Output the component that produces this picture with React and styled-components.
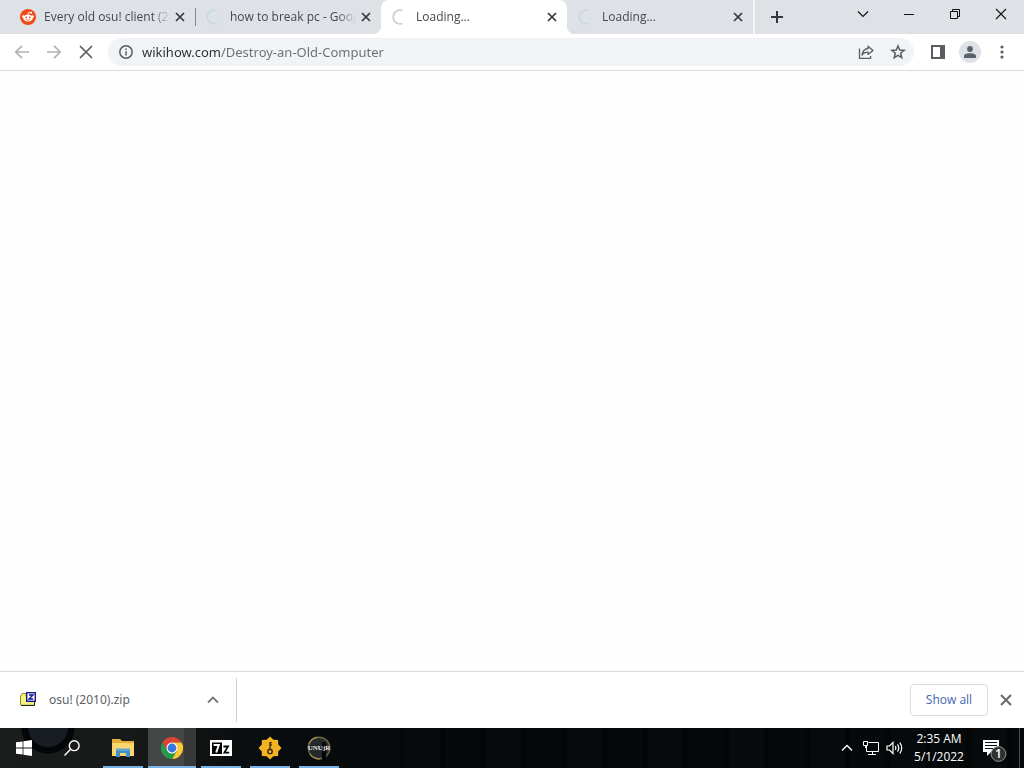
import React from 'react';
import styled, { createGlobalStyle, css } from 'styled-components';

const GlobalStyle = createGlobalStyle`
  * { box-sizing: border-box; }
  html, body, #root { height: 100%; }
  body {
    margin: 0;
    overflow: hidden;
    font-family: "Open Sans", "Noto Sans", sans-serif;
    font-size: 12px;
    color: #3c4043;
  }
  button, input { font: inherit; color: inherit; }
`;

const Desktop = styled.div`
  display: flex;
  flex-direction: column;
  height: 100vh;
  background: #fff;
`;

const PlainButton = styled.button`
  display: flex;
  align-items: center;
  justify-content: center;
  flex: none;
  padding: 0;
  border: 0;
  background: transparent;
`;

const TabStrip = styled.header`
  display: flex;
  height: 34px;
  padding-left: 9px;
  background: #dee1e6;
`;

const Tabs = styled.div`
  display: flex;
  flex: 0 1 744px;
  min-width: 0;
`;

const Tab = styled.div`
  display: flex;
  align-items: center;
  flex: 1 1 0;
  min-width: 0;
  height: 34px;
  padding: 0 7px 0 11px;
  position: relative;
  ${({ $active }) => $active && css`
    background: #fff;
    border-radius: 8px 8px 0 0;
    &::before, &::after {
      content: "";
      position: absolute;
      bottom: 0;
      width: 8px;
      height: 8px;
    }
    &::before {
      left: -8px;
      background: radial-gradient(circle at 0 0, transparent 8px, #fff 8px);
    }
    &::after {
      right: -8px;
      background: radial-gradient(circle at 100% 0, transparent 8px, #fff 8px);
    }
  `}
  ${({ $divider }) => $divider && css`
    &::after {
      content: "";
      position: absolute;
      right: -1px;
      top: 8px;
      width: 1px;
      height: 18px;
      background: #85888d;
    }
  `}
`;

const TabTitle = styled.span`
  flex: 1;
  min-width: 0;
  margin-left: 8px;
  overflow: hidden;
  white-space: nowrap;
  line-height: 18px;
  color: #45494d;
  mask-image: linear-gradient(to left, transparent 2px, #000 20px);
`;

const TabClose = styled(PlainButton)`
  width: 16px;
  height: 16px;
  color: #34373b;
`;

const NewTab = styled(PlainButton)`
  width: 46px;
  border-left: 2px solid #f1f3f5;
  color: #34373b;
`;

const WindowControls = styled.div`
  display: flex;
  height: 28px;
  margin-left: auto;
`;

const WindowButton = styled(PlainButton)`
  width: 46px;
  color: #111;
`;

const Toolbar = styled.nav`
  display: flex;
  align-items: center;
  height: 37px;
  padding: 0 6px;
  border-bottom: 1px solid #d9dadc;
`;

const ToolButton = styled(PlainButton)`
  width: 32px;
  height: 28px;
  color: ${({ disabled }) => (disabled ? '#b0b2b4' : '#5a5e62')};
`;

const Omnibox = styled.div`
  display: flex;
  align-items: center;
  flex: 1;
  min-width: 0;
  height: 28px;
  margin: 0 8px 0 6px;
  border-radius: 14px;
  background: #f1f3f4;
`;

const SiteInfo = styled(PlainButton)`
  width: 34px;
  padding-left: 2px;
  color: #5a5e62;
`;

const Address = styled.input`
  flex: 1;
  min-width: 0;
  height: 20px;
  padding: 0;
  border: 0;
  outline: 0;
  font-family: "Noto Sans", "Open Sans", sans-serif;
  font-size: 13px;
  line-height: 20px;
  color: transparent;
  background: linear-gradient(to right, #2b2e31 79px, #6a6e72 79px);
  -webkit-background-clip: text;
  background-clip: text;
`;

const Avatar = styled.span`
  display: flex;
  align-items: center;
  justify-content: center;
  width: 22px;
  height: 22px;
  border-radius: 50%;
  background: #dee1e6;
`;

const Page = styled.main`
  flex: 1;
  min-height: 0;
  background: #fefefe;
`;

const DownloadShelf = styled.section`
  display: flex;
  align-items: center;
  height: 57px;
  padding-right: 8px;
  border-top: 1px solid #d9dadc;
`;

const Download = styled.div`
  display: flex;
  align-items: center;
  width: 237px;
  height: 44px;
  padding: 0 15px 0 20px;
  border-right: 1px solid #cfd1d3;
`;

const FileName = styled.span`
  flex: 1;
  margin-left: 13px;
  font-family: "Noto Sans", "Open Sans", sans-serif;
  line-height: 20px;
  color: #5d6165;
`;

const ShelfMenu = styled(PlainButton)`
  width: 16px;
  height: 16px;
  color: #77797c;
`;

const ShowAll = styled.button`
  width: 78px;
  height: 32px;
  margin-left: auto;
  padding: 0 0 2px;
  border: 1px solid #dadce0;
  border-radius: 4px;
  background: #fff;
  font-weight: 500;
  color: #3f66ae;
`;

const ShelfClose = styled(PlainButton)`
  width: 20px;
  height: 20px;
  margin-left: 8px;
  color: #696c6f;
`;

const Taskbar = styled.footer`
  display: flex;
  height: 40px;
  color: #fff;
  background:
    radial-gradient(ellipse 27px 26px at 48px 0, #181d23 0 70%, #040506 76% 96%, transparent 100%),
    linear-gradient(to right, #1b1c1c 0, #171818 140px, #0b0e10 240px, #070a0b 350px, transparent 440px),
    repeating-linear-gradient(to right, #070a0c 0 34px, #030505 36px 39px, #06090c 41px 74px, #040606 76px 81px);
`;

const TaskGroup = styled.div`
  display: flex;
  gap: 1px;
  margin-left: 3px;
`;

const TaskButton = styled(PlainButton)`
  width: 48px;
  height: 40px;
  position: relative;
  ${({ $running }) => $running && css`
    &::after {
      content: "";
      position: absolute;
      bottom: 0;
      left: ${({ $current }) => ($current ? 0 : 4)}px;
      right: ${({ $current }) => ($current ? 0 : 4)}px;
      height: 2px;
      background: #76b4e8;
    }
  `}
  ${({ $current }) => $current && css`
    background: linear-gradient(to right, #454747 75%, #383a3a 75%);
  `}
`;

const Tray = styled.div`
  display: flex;
  margin-left: auto;
`;

const TrayButton = styled(PlainButton)`
  width: 24px;
`;

const Clock = styled(PlainButton)`
  flex-direction: column;
  width: 64px;
  font-size: 12px;
  line-height: 18px;
`;

const ActionCenter = styled(PlainButton)`
  width: 48px;
`;

const ShowDesktop = styled(PlainButton)`
  width: 5px;
  border-left: 1px solid #4b4d4f;
`;

const Cross = ({ size = 8, stroke = 1.7 }) => (
  <svg width={size + 2} height={size + 2} viewBox={`-1 -1 ${size + 2} ${size + 2}`} fill="none" stroke="currentColor" strokeWidth={stroke} aria-hidden="true">
    <path d={`M0 0 L${size} ${size} M${size} 0 L0 ${size}`} />
  </svg>
);

const Spinner = ({ color }) => (
  <svg width="16" height="16" viewBox="0 0 16 16" fill="none" stroke={color} strokeWidth="1.6" aria-hidden="true">
    <path d="M10.5 1.4 A7 7 0 1 0 10.5 14.6" />
  </svg>
);

const RedditIcon = () => (
  <svg width="16" height="16" viewBox="0 0 16 16" aria-hidden="true">
    <circle cx="8" cy="8" r="8" fill="#f04a17" />
    <path d="M8 6 L8.7 3.3 L11 3.8" fill="none" stroke="#fff" strokeWidth="0.8" />
    <circle cx="11.2" cy="3.8" r="1" fill="#fff" />
    <circle cx="3.4" cy="7.6" r="1.3" fill="#fff" />
    <circle cx="12.6" cy="7.6" r="1.3" fill="#fff" />
    <ellipse cx="8" cy="9.1" rx="4.8" ry="3.5" fill="#fff" />
    <circle cx="6.1" cy="8.4" r="0.9" fill="#f04a17" />
    <circle cx="9.9" cy="8.4" r="0.9" fill="#f04a17" />
    <path d="M6 10.5 Q8 11.9 10 10.5" fill="none" stroke="#f04a17" strokeWidth="0.7" />
  </svg>
);

const PlusIcon = () => (
  <svg width="12" height="12" viewBox="0 0 12 12" stroke="currentColor" strokeWidth="2" aria-hidden="true">
    <path d="M6 0 V12 M0 6 H12" />
  </svg>
);

const ArrowIcon = ({ forward }) => (
  <svg width="16" height="16" viewBox="0 0 16 16" fill="none" stroke="currentColor" strokeWidth="1.7" aria-hidden="true">
    <path d={forward ? 'M1 8 H14 M8 1.8 L14.2 8 L8 14.2' : 'M15 8 H2 M8 1.8 L1.8 8 L8 14.2'} />
  </svg>
);

const InfoIcon = () => (
  <svg width="14" height="14" viewBox="0 0 14 14" fill="none" stroke="currentColor" strokeWidth="1.5" aria-hidden="true">
    <circle cx="7" cy="7" r="6.2" />
    <path d="M7 6.2 V10.4 M7 3.5 V5" />
  </svg>
);

const ShareIcon = () => (
  <svg width="16" height="16" viewBox="0 0 16 16" fill="none" stroke="currentColor" strokeWidth="1.3" strokeLinejoin="round" aria-hidden="true">
    <path d="M1.5 4.5 V14.4 H12.6 V12" />
    <path d="M10 2.2 L15 6.4 L10 10.4 V8.2 C7 8.2 5.3 9 4 11.2 C4.4 7.4 6.5 4.9 10 4.5 Z" />
  </svg>
);

const StarIcon = () => (
  <svg width="16" height="16" viewBox="0 0 16 16" fill="none" stroke="currentColor" strokeWidth="1.5" aria-hidden="true">
    <path d="M8 2 L9.7 6.1 L14.1 6.4 L10.7 9.3 L11.8 13.7 L8 11.3 L4.2 13.7 L5.3 9.3 L1.9 6.4 L6.3 6.1 Z" />
  </svg>
);

const SidePanelIcon = () => (
  <svg width="14" height="14" viewBox="0 0 14 14" aria-hidden="true">
    <path d="M0 0 H14 V14 H0 Z M2 2 V12 H9 V2 Z" fill="currentColor" fillRule="evenodd" />
  </svg>
);

const PersonIcon = () => (
  <svg width="12" height="12" viewBox="0 0 12 12" fill="#58636d" aria-hidden="true">
    <circle cx="6" cy="3" r="2.9" />
    <path d="M0 12 V10.2 C0 8 3 7.2 6 7.2 S12 8 12 10.2 V12 Z" />
  </svg>
);

const DotsIcon = () => (
  <svg width="4" height="14" viewBox="0 0 4 14" fill="currentColor" aria-hidden="true">
    <circle cx="2" cy="2" r="1.6" />
    <circle cx="2" cy="7" r="1.6" />
    <circle cx="2" cy="12" r="1.6" />
  </svg>
);

const Chevron = ({ up, width = 10, stroke = 1.2 }) => (
  <svg width={width + 2} height="8" viewBox={`-1 0 ${width + 2} 8`} fill="none" stroke="currentColor" strokeWidth={stroke} aria-hidden="true">
    <path d={up ? `M0 6.5 L${width / 2} 1.5 L${width} 6.5` : `M0 1.5 L${width / 2} 6.5 L${width} 1.5`} />
  </svg>
);

const MinimizeIcon = () => (
  <svg width="10" height="10" viewBox="0 0 10 10" stroke="currentColor" aria-hidden="true">
    <path d="M0 5.5 H10" />
  </svg>
);

const RestoreIcon = () => (
  <svg width="10" height="10" viewBox="0 0 10 10" fill="none" stroke="currentColor" aria-hidden="true">
    <path d="M0.5 2.5 H7.5 V9.5 H0.5 Z M2.5 2.5 V0.5 H9.5 V7.5 H7.5" />
  </svg>
);

const ZipFileIcon = () => (
  <svg width="16" height="16" viewBox="0 0 16 16" aria-hidden="true">
    <path d="M0.5 4 L2 1.5 H6 V11.5 H14.5 V13 H0.5 Z" fill="#f2f27c" stroke="#8a8a3a" />
    <path d="M1 13.5 H14.5 V9" fill="none" stroke="#222" />
    <rect x="1" y="4" width="13" height="8.5" fill="#f2f27c" />
    <rect x="6.7" y="0.7" width="8.6" height="8.6" fill="#fff" stroke="#17178c" strokeWidth="1.4" />
    <path d="M9 3 H13 L9 7 H13.2" fill="none" stroke="#17178c" strokeWidth="1.4" />
  </svg>
);

const WindowsIcon = () => (
  <svg width="16" height="16" viewBox="0 0 16 16" fill="#fff" aria-hidden="true">
    <path d="M0 2.3 L6.6 1.4 V7.6 H0 Z M7.4 1.3 L16 0 V7.6 H7.4 Z M0 8.4 H6.6 V14.6 L0 13.7 Z M7.4 8.4 H16 V16 L7.4 14.7 Z" />
  </svg>
);

const SearchIcon = () => (
  <svg width="16" height="16" viewBox="0 0 16 16" fill="none" stroke="#fff" strokeWidth="1.4" aria-hidden="true">
    <circle cx="10.2" cy="5.7" r="4.9" />
    <path d="M6.6 9.3 L0.5 15.5" />
  </svg>
);

const FolderIcon = () => (
  <svg width="22" height="18" viewBox="0 0 22 18" aria-hidden="true">
    <path d="M0 0 H8 L10 2 H22 V17 H0 Z" fill="#e6ad37" />
    <path d="M0 4 H22 V17 H0 Z" fill="#fbd66e" />
    <path d="M4 18 V10 H18 V18 H14 V14 H8 V18 Z" fill="#438fc3" />
    <path d="M4 9.5 H18 V12 H4 Z" fill="#5ba6d5" />
  </svg>
);

const ChromeIcon = () => (
  <svg width="22" height="22" viewBox="-11 -11 22 22" aria-hidden="true">
    <path d="M-9.53 -5.5 A11 11 0 0 1 9.53 -5.5 L0 -5.5 L-4.76 2.75 Z" fill="#dc4437" />
    <path d="M9.53 -5.5 A11 11 0 0 1 0 11 L4.76 2.75 L0 -5.5 Z" fill="#fbc934" />
    <path d="M0 11 A11 11 0 0 1 -9.53 -5.5 L-4.76 2.75 L4.76 2.75 Z" fill="#269a4c" />
    <circle r="5.5" fill="#fff" />
    <circle r="4.4" fill="#3877e3" />
  </svg>
);

const SevenZipIcon = () => (
  <svg width="22" height="16" viewBox="0 0 22 16" aria-hidden="true">
    <rect width="22" height="16" fill="#fff" />
    <path d="M2 2.5 H12 V14 H2 Z" fill="#050505" />
    <path d="M3.6 5 H8.8 L6.2 12.5" fill="none" stroke="#fff" strokeWidth="2" />
    <path d="M13.4 6.5 H18 L14.4 12.6 H19.2" fill="none" stroke="#050505" strokeWidth="1.8" />
  </svg>
);

const KeyIcon = () => (
  <svg width="24" height="24" viewBox="-12 -12 24 24" aria-hidden="true">
    <path d="M0 -11.5 L3.4 -8.2 L8.1 -8.1 L8.2 -3.4 L11.5 0 L8.2 3.4 L8.1 8.1 L3.4 8.2 L0 11.5 L-3.4 8.2 L-8.1 8.1 L-8.2 3.4 L-11.5 0 L-8.2 -3.4 L-8.1 -8.1 L-3.4 -8.2 Z" fill="#f4b323" />
    <circle cx="0" cy="3.4" r="2.2" fill="none" stroke="#392808" strokeWidth="1.4" />
    <path d="M0 1.4 V-6 M0 -5.4 H1.8 M0 -3 H1.8" fill="none" stroke="#392808" strokeWidth="1.3" />
  </svg>
);

const UnuIcon = () => (
  <svg width="24" height="24" viewBox="-12 -12 24 24" aria-hidden="true">
    <circle r="10.8" fill="#25292b" stroke="#6c6548" strokeWidth="1.4" />
    <path d="M-10.2 -4 A10.8 10.8 0 0 1 -2 -10.6 M-9 6 A10.8 10.8 0 0 0 1 10.8" fill="none" stroke="#a88e48" strokeWidth="1.2" />
    <rect x="3" y="-6" width="4" height="18" fill="#050707" />
    <text x="0" y="2" textAnchor="middle" fontFamily="Liberation Serif, serif" fontWeight="700" fontSize="7" fill="#e4e6e8">UNUjR</text>
  </svg>
);

const NetworkIcon = () => (
  <svg width="16" height="16" viewBox="0 0 16 16" fill="none" stroke="#fff" aria-hidden="true">
    <path d="M5.5 2.5 H15.5 V11.5 H3.5 V6 M9.5 11.5 V14 M5 14.5 H13" />
    <path d="M0.5 1.5 H4.5 V5.5 H0.5 Z M2.5 5.5 V8" />
  </svg>
);

const VolumeIcon = () => (
  <svg width="18" height="14" viewBox="0 0 18 14" fill="none" stroke="#fff" strokeWidth="1.2" aria-hidden="true">
    <path d="M1 5 H3.5 L7 1.5 V12.5 L3.5 9 H1 Z" />
    <path d="M9.2 5 Q10.6 7 9.2 9 M11.5 3.4 Q14 7 11.5 10.6 M13.8 1.6 Q17.6 7 13.8 12.4" />
  </svg>
);

const NotificationIcon = () => (
  <svg width="28" height="28" viewBox="0 0 28 28" aria-hidden="true">
    <path d="M2 6 H18 V18 H10 L6 22 V18 H2 Z" fill="#fff" />
    <path d="M4 8.5 H16 M4 11.5 H16 M4 14.5 H12" stroke="#080a0b" />
    <circle cx="17.5" cy="20" r="7.4" fill="#303334" stroke="#8c8e90" />
    <text x="17.5" y="24" textAnchor="middle" fontFamily="Open Sans, sans-serif" fontWeight="600" fontSize="12" fill="#fff">1</text>
  </svg>
);

const tabs = [
  { title: 'Every old osu! client (20', icon: <RedditIcon />, divider: true },
  { title: 'how to break pc - Goog', icon: <Spinner color="#c6daea" /> },
  { title: 'Loading...', icon: <Spinner color="#c3ccd5" />, active: true },
  { title: 'Loading...', icon: <Spinner color="#cbd8e4" /> },
];

const apps = [
  { name: 'File Explorer', icon: <FolderIcon /> },
  { name: 'Google Chrome', icon: <ChromeIcon />, current: true },
  { name: '7-Zip', icon: <SevenZipIcon /> },
  { name: 'Key manager', icon: <KeyIcon /> },
  { name: 'UNU', icon: <UnuIcon /> },
];

export default function App() {
  return (
    <Desktop>
      <GlobalStyle />
      <TabStrip>
        <Tabs role="tablist">
          {tabs.map((tab, i) => (
            <Tab key={i} role="tab" aria-selected={!!tab.active} $active={tab.active} $divider={tab.divider}>
              {tab.icon}
              <TabTitle>{tab.title}</TabTitle>
              <TabClose aria-label="Close tab"><Cross /></TabClose>
            </Tab>
          ))}
        </Tabs>
        <NewTab aria-label="New tab"><PlusIcon /></NewTab>
        <WindowControls>
          <WindowButton aria-label="Search tabs"><Chevron /></WindowButton>
          <WindowButton aria-label="Minimize"><MinimizeIcon /></WindowButton>
          <WindowButton aria-label="Restore"><RestoreIcon /></WindowButton>
          <WindowButton aria-label="Close"><Cross size={10} stroke={1.1} /></WindowButton>
        </WindowControls>
      </TabStrip>
      <Toolbar>
        <ToolButton aria-label="Back" disabled><ArrowIcon /></ToolButton>
        <ToolButton aria-label="Forward" disabled><ArrowIcon forward /></ToolButton>
        <ToolButton aria-label="Stop loading"><Cross size={12} stroke={1.7} /></ToolButton>
        <Omnibox>
          <SiteInfo aria-label="Site information"><InfoIcon /></SiteInfo>
          <Address aria-label="Address" type="text" defaultValue="wikihow.com/Destroy-an-Old-Computer" spellCheck={false} />
          <ToolButton aria-label="Share"><ShareIcon /></ToolButton>
          <ToolButton aria-label="Bookmark"><StarIcon /></ToolButton>
        </Omnibox>
        <ToolButton aria-label="Side panel"><SidePanelIcon /></ToolButton>
        <ToolButton aria-label="Profile"><Avatar><PersonIcon /></Avatar></ToolButton>
        <ToolButton aria-label="Menu"><DotsIcon /></ToolButton>
      </Toolbar>
      <Page />
      <DownloadShelf>
        <Download>
          <ZipFileIcon />
          <FileName>osu! (2010).zip</FileName>
          <ShelfMenu aria-label="Download options"><Chevron up stroke={1.8} /></ShelfMenu>
        </Download>
        <ShowAll>Show all</ShowAll>
        <ShelfClose aria-label="Close downloads"><Cross size={10} stroke={2} /></ShelfClose>
      </DownloadShelf>
      <Taskbar>
        <TaskButton aria-label="Start"><WindowsIcon /></TaskButton>
        <TaskButton aria-label="Search"><SearchIcon /></TaskButton>
        <TaskGroup>
          {apps.map((app) => (
            <TaskButton key={app.name} aria-label={app.name} $running $current={app.current}>{app.icon}</TaskButton>
          ))}
        </TaskGroup>
        <Tray>
          <TrayButton aria-label="Hidden icons"><Chevron up stroke={1.4} /></TrayButton>
          <TrayButton aria-label="Network"><NetworkIcon /></TrayButton>
          <TrayButton aria-label="Volume"><VolumeIcon /></TrayButton>
          <Clock>
            <span>2:35 AM</span>
            <span>5/1/2022</span>
          </Clock>
          <ActionCenter aria-label="Notifications"><NotificationIcon /></ActionCenter>
          <ShowDesktop aria-label="Show desktop" />
        </Tray>
      </Taskbar>
    </Desktop>
  );
}
